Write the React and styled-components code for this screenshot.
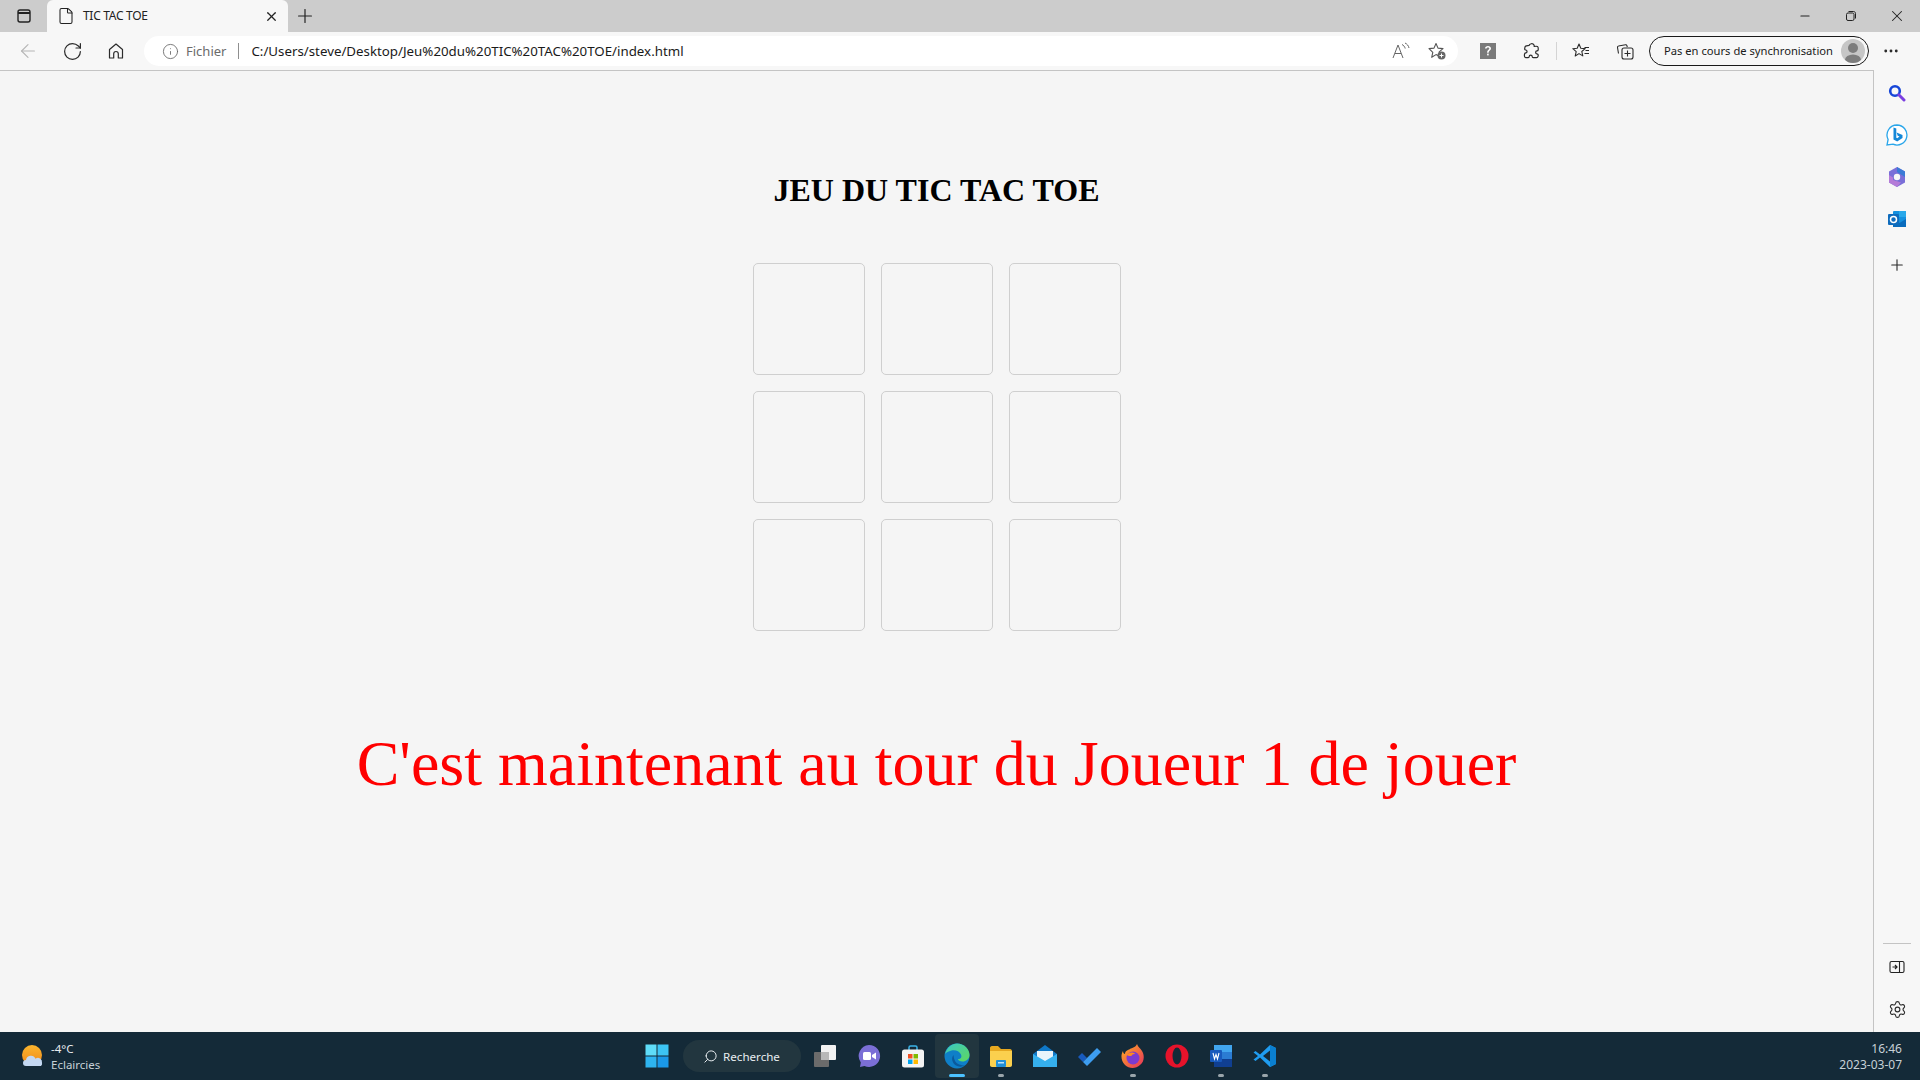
import styled, { createGlobalStyle } from "styled-components";
import {
  ArrowLeft,
  RotateCw,
  Info,
  Plus,
  X,
  Minus,
  File,
  Settings,
  Search,
  MoreHorizontal,
} from "lucide-react";

const GlobalStyle = createGlobalStyle`
  html, body {
    margin: 0;
    padding: 0;
    height: 100%;
    overflow: hidden;
  }
  body {
    font-family: "Noto Sans", "Open Sans", sans-serif;
  }
`;

const Page = styled.div`
  width: 1920px;
  height: 1080px;
  display: flex;
  flex-direction: column;
`;

const TabStrip = styled.div`
  height: 32px;
  background-color: #cccccc;
  display: flex;
  align-items: flex-end;
  flex-shrink: 0;
`;

const StripButton = styled.div`
  width: 47px;
  height: 32px;
  display: flex;
  align-items: center;
  justify-content: center;
  color: #222;
  flex-shrink: 0;
`;

const Tab = styled.div`
  width: 241px;
  height: 32px;
  background-color: #f7f7f7;
  border-radius: 6px 6px 0 0;
  display: flex;
  align-items: center;
  padding: 0 9px 0 10px;
  box-sizing: border-box;
  gap: 8px;
  color: #222;
  flex-shrink: 0;
`;

const TabTitle = styled.span`
  flex: 1;
  font-size: 12px;
  color: #222;
  letter-spacing: -0.3px;
  margin-bottom: 2px;
`;

const NewTab = styled.div`
  width: 34px;
  height: 32px;
  display: flex;
  align-items: center;
  justify-content: center;
  color: #222;
`;

const WindowControls = styled.div`
  margin-left: auto;
  display: flex;
`;

const WindowButton = styled.div`
  width: 46px;
  height: 32px;
  display: flex;
  align-items: center;
  justify-content: center;
  color: #222;
`;

const Toolbar = styled.div`
  height: 38px;
  box-sizing: border-box;
  background-color: #f7f7f7;
  display: flex;
  align-items: center;
  padding-left: 6px;
  flex-shrink: 0;
`;

const ToolButton = styled.div`
  width: 44px;
  height: 30px;
  display: flex;
  align-items: center;
  justify-content: center;
  color: ${(p) => (p.$muted ? "#b5b5b5" : "#2b2b2b")};
  flex-shrink: 0;
`;

const AddressBar = styled.div`
  width: 1314px;
  height: 30px;
  margin: 0 8px 0 6px;
  background-color: #ffffff;
  border-radius: 15px;
  display: flex;
  align-items: center;
  padding: 0 3px 0 18px;
  box-sizing: border-box;
  flex-shrink: 0;
`;

const Scheme = styled.span`
  font-size: 13px;
  color: #6b6b6b;
  margin-left: 7px;
`;

const AddressDivider = styled.span`
  width: 1px;
  height: 16px;
  background-color: #8f8f8f;
  margin: 0 12px;
`;

const Url = styled.span`
  flex: 1;
  font-size: 13.3px;
  color: #1a1a1a;
  white-space: nowrap;
`;

const AddressAction = styled.div`
  width: 36px;
  height: 30px;
  display: flex;
  align-items: center;
  justify-content: center;
`;

const ToolSeparator = styled.span`
  width: 1px;
  height: 18px;
  background-color: #d4d4d4;
  margin: 0 2px;
  flex-shrink: 0;
`;

const ProfilePill = styled.div`
  width: 220px;
  height: 30px;
  box-sizing: border-box;
  border: 1px solid #1a1a1a;
  border-radius: 15px;
  display: flex;
  align-items: center;
  justify-content: space-between;
  padding: 0 3px 1px 14px;
  font-size: 11.2px;
  color: #1a1a1a;
  flex-shrink: 0;
  margin-left: 2px;
`;

const Avatar = styled.span`
  width: 24px;
  height: 24px;
  border-radius: 50%;
  background-color: #c6c6c6;
  display: flex;
  align-items: center;
  justify-content: center;
  overflow: hidden;
`;

const Main = styled.div`
  flex: 1;
  display: flex;
  min-height: 0;
`;

const Content = styled.main`
  flex: 1;
  background-color: #f5f5f5;
  border-top: 1px solid #c4c4c4;
  border-right: 1px solid #c4c4c4;
  display: flex;
  flex-direction: column;
  align-items: center;
  font-family: "Liberation Serif", "Times New Roman", serif;
`;

const Title = styled.h1`
  font-size: 32px;
  font-weight: 700;
  line-height: 37px;
  color: #000;
  margin: 101px 0 54px;
`;

const Board = styled.div`
  display: grid;
  grid-template-columns: repeat(3, 112px);
  grid-auto-rows: 112px;
  gap: 16px;
`;

const Cell = styled.div`
  box-sizing: border-box;
  border: 1px solid #cfcfcf;
  border-radius: 5px;
`;

const Message = styled.p`
  font-size: 64px;
  line-height: 74px;
  color: #ff0000;
  margin: 96px 0 0;
`;

const Sidebar = styled.aside`
  width: 46px;
  background-color: #f7f7f7;
  display: flex;
  flex-direction: column;
  align-items: center;
  padding-top: 2px;
  box-sizing: border-box;
`;

const SideButton = styled.div`
  width: 46px;
  height: 42px;
  display: flex;
  align-items: center;
  justify-content: center;
  color: #2b2b2b;
`;

const SideAdd = styled(SideButton)`
  margin-top: 4px;
`;

const SideBottom = styled.div`
  margin-top: auto;
  display: flex;
  flex-direction: column;
  align-items: center;
  padding-bottom: 2px;
`;

const SideRule = styled.span`
  width: 28px;
  height: 1px;
  background-color: #c4c4c4;
  margin-bottom: 2px;
`;

const Taskbar = styled.footer`
  height: 48px;
  background-color: #142a38;
  display: grid;
  grid-template-columns: 1fr auto 1fr;
  align-items: center;
  color: #e8edf0;
  flex-shrink: 0;
`;

const Weather = styled.div`
  display: flex;
  align-items: center;
  gap: 6px;
  padding-left: 21px;
`;

const WeatherText = styled.div`
  display: flex;
  flex-direction: column;
  font-size: 11.5px;
  line-height: 16px;
  padding-top: 2px;
`;

const WeatherSub = styled.span`
  color: #c6d0d6;
`;

const Centre = styled.div`
  display: flex;
  align-items: center;
  margin-left: 1px;
`;

const TaskIcon = styled.div`
  width: 44px;
  height: 44px;
  display: flex;
  align-items: center;
  justify-content: center;
  position: relative;
  border-radius: 4px;
  background-color: ${(p) => (p.$active ? "#22363f" : "transparent")};
`;

const RunDot = styled.span`
  position: absolute;
  bottom: 1px;
  left: 50%;
  transform: translateX(-50%);
  height: 3px;
  border-radius: 2px;
  width: ${(p) => (p.$active ? "16px" : "6px")};
  background-color: ${(p) => (p.$active ? "#4cc2ff" : "#9aa5ab")};
`;

const SearchPill = styled.div`
  width: 118px;
  height: 32px;
  margin: 0 2px 0 4px;
  border-radius: 16px;
  background-color: #22363f;
  display: flex;
  align-items: center;
  justify-content: center;
  gap: 5px;
  font-size: 11.6px;
  color: #e8edf0;
`;

const FlippedSearch = styled(Search)`
  transform: scaleX(-1);
`;

const Clock = styled.div`
  justify-self: end;
  padding: 2px 18px 0 0;
  text-align: right;
  font-size: 12px;
  line-height: 16px;
  color: #c6d0d6;
`;

const HomeIcon = () => (
  <svg width="20" height="20" viewBox="0 0 20 20" fill="none" stroke="#2b2b2b" strokeWidth="1.2" strokeLinejoin="round">
    <path d="M3.500 8.500L10 3l6.500 5.500V17h-4.200v-4.200a2.300 2.300 0 0 0-4.600 0V17H3.500z" />
  </svg>
);

const PuzzleIcon = () => (
  <svg width="20" height="20" viewBox="0 0 20 20" fill="none" stroke="#2b2b2b" strokeWidth="1.200" strokeLinejoin="round">
    <path d="M7 4.500C7.500 2.500 11 2 12 4c.3.700.2 1 .2 1.500 1.400-.3 2.600-.3 3.300 0 .8.400.8 2 .7 3.300-.1.700-.6 1-1.300 1-1.600 0-1.700 3 0 3 .7 0 1.200.3 1.300 1 .1 1 0 1.800-.7 2.400-.8.500-2.800.500-4.300.400-.7 0-1-.5-1-1.200 0-1.700-3-1.700-3 0 0 .7-.3 1.200-1 1.200-1.300.1-2.500.1-3.200-.4-.6-.5-.7-2-.4-3.400.2-.7.7-1 1.300-1 1.500 0 1.500-2.800-.1-2.800C3 9 2.600 8.500 2.700 7.600c.1-1.200.3-2 1-2.500C4.500 4.700 6 4.700 7 4.500z" />
  </svg>
);

const StarPlus = () => (
  <svg width="20" height="20" viewBox="0 0 20 20" fill="none">
    <path d="M9 2.500l2 4.600 5 .5-3.800 3.300 1.100 4.900L9 13.600l-4.300 2.700 1.100-4.900L2 7.600l5-.5z" stroke="#555" strokeWidth="1.100" strokeLinejoin="round" />
    <circle cx="14.500" cy="14.500" r="4" fill="#666" />
    <path d="M14.500 12.500v4M12.500 14.500h4" stroke="#fff" strokeWidth="1" />
  </svg>
);

const ReadAloud = () => (
  <svg width="20" height="18" viewBox="0 0 20 18" fill="none" stroke="#666" strokeWidth="1">
    <path d="M2 16L7 3l5 13M4 11.500h6" />
    <path d="M11 2.500c1.600.8 2.800 2.200 3.200 4M14 1c2 .9 3.600 2.800 4 5" />
  </svg>
);

const HelpBox = () => (
  <svg width="16" height="16" viewBox="0 0 16 16">
    <rect width="16" height="16" fill="#7a7a7a" />
    <path d="M5 5.600C5 4 6.400 3 8 3s3 1 3 2.500c0 2-2.400 2.100-2.400 4.200H7.100c0-2.700 2.200-2.800 2.200-4.200 0-.6-.6-1-1.300-1-.8 0-1.300.5-1.400 1.100z" fill="#fff" />
    <rect x="7.100" y="10.600" width="1.600" height="1.800" fill="#fff" />
  </svg>
);

const FavouritesIcon = () => (
  <svg width="20" height="20" viewBox="0 0 20 20" fill="none" stroke="#2b2b2b" strokeWidth="1.100" strokeLinejoin="round">
    <path d="M8 3l1.800 4.200 4.400.4-3.400 2.900 1 4.400L8 12.600 4.200 15l1-4.400-3.400-2.900 4.400-.4z" />
    <path d="M13.500 6.500H18M14.500 9.500H18M13.500 12.500H18" />
  </svg>
);

const CollectionsIcon = () => (
  <svg width="20" height="20" viewBox="0 0 20 20" fill="none" stroke="#2b2b2b" strokeWidth="1.100">
    <path d="M3.500 12.500l-1-6c-.1-.8.3-1.400 1-1.500l7-1.200c.6-.1 1.200.2 1.400.8l.4 1.400" />
    <rect x="7" y="7" width="11" height="11" rx="2" />
    <path d="M12.500 9.500v6M9.500 12.500h6" />
  </svg>
);

const SidebarToggleIcon = () => (
  <svg width="16" height="16" viewBox="0 0 16 16" fill="none" stroke="#222" strokeWidth="1.400">
    <rect x="2" y="2" width="12" height="12" rx="2" />
    <path d="M2 5h12" strokeWidth="2" />
  </svg>
);

const RestoreIcon = () => (
  <svg width="12" height="12" viewBox="0 0 12 12" fill="none" stroke="#222" strokeWidth="1">
    <rect x="1.500" y="3" width="7.500" height="7.500" rx="1.500" />
    <path d="M3.500 1.500h5c1.200 0 2 .8 2 2v5" />
  </svg>
);

const BingSearch = () => (
  <svg width="18" height="18" viewBox="0 0 18 18" fill="none">
    <circle cx="7" cy="7" r="4.800" stroke="#1646d8" strokeWidth="2.600" />
    <path d="M10.800 10.800L16 16" stroke="#7b3fe0" strokeWidth="3" strokeLinecap="round" />
  </svg>
);

const BingChat = () => (
  <svg width="22" height="22" viewBox="0 0 22 22" fill="none">
    <path d="M11 1a10 10 0 1 1-4 19.200L1 21l1.100-5.500A10 10 0 0 1 11 1z" stroke="#2aa6ea" strokeWidth="1.300" fill="#fff" />
    <path d="M7.500 3.500v12l3.700 2 5.300-3.400V11l-5.900-2.400 1.100 3.200 1.800.8-2.300 1.600-.9-.5V4.500z" fill="#1588d8" />
  </svg>
);

const Office = () => (
  <svg width="20" height="22" viewBox="0 0 20 22" fill="none">
    <path d="M10 1l8 4.600v10.800L10 21l-8-4.600V5.600z" fill="#7a6fd8" />
    <path d="M10 1l8 4.600V11l-4-2.500-4-2.400z" fill="#3b7bd6" />
    <path d="M2 16.400V9l4 2.400V14l8 2.400-4 4.600z" fill="#b57bd8" />
    <circle cx="10" cy="11" r="3.200" fill="#f7f7f7" />
  </svg>
);

const Outlook = () => (
  <svg width="20" height="20" viewBox="0 0 20 20">
    <rect x="6" y="2" width="13" height="16" rx="1" fill="#1490df" />
    <rect x="12" y="2" width="7" height="6" fill="#28a8ea" />
    <path d="M6 10l6.500 4L19 10v8H6z" fill="#0a6cbd" />
    <rect x="1" y="5" width="11" height="11" rx="1" fill="#0f6cbd" />
    <circle cx="6.500" cy="10.500" r="3" fill="none" stroke="#fff" strokeWidth="1.500" />
  </svg>
);

const SidePanelIcon = () => (
  <svg width="16" height="16" viewBox="0 0 16 16" fill="none" stroke="#222" strokeWidth="1.100">
    <rect x="1" y="2.500" width="14" height="11" rx="1.500" />
    <path d="M10.500 2.500v11" />
    <path d="M3.500 8h4M6 6l2 2-2 2" strokeWidth="1.200" />
  </svg>
);

const WeatherIcon = () => (
  <svg width="24" height="24" viewBox="0 0 24 24">
    <defs>
      <linearGradient id="sun" x1="0" y1="0" x2="0" y2="1">
        <stop offset="0" stopColor="#fbb52d" />
        <stop offset="1" stopColor="#ef8a1c" />
      </linearGradient>
    </defs>
    <circle cx="11" cy="11" r="10" fill="url(#sun)" />
    <path d="M5 22a3 3 0 0 1 0-6 5 5 0 0 1 9.500-1.200A4 4 0 0 1 21 18.500 3.500 3.500 0 0 1 20 22z" fill="#c4d8f2" />
  </svg>
);

const StartIcon = () => (
  <svg width="24" height="24" viewBox="0 0 24 24">
    <rect x="0.500" y="0.500" width="11" height="11" fill="#5fdcf8" />
    <rect x="12.500" y="0.500" width="11" height="11" fill="#3cc4f4" />
    <rect x="0.500" y="12.500" width="11" height="11" fill="#2eb4f0" />
    <rect x="12.500" y="12.500" width="11" height="11" fill="#1a98e8" />
  </svg>
);

const TaskViewIcon = () => (
  <svg width="24" height="24" viewBox="0 0 24 24">
    <rect x="8" y="1" width="15" height="15" rx="1" fill="#f2f2f2" />
    <rect x="1" y="8" width="15" height="15" rx="1" fill="#6b6b6b" />
    <rect x="8" y="8" width="8" height="8" fill="#b8b8b8" />
  </svg>
);

const TeamsIcon = () => (
  <svg width="24" height="24" viewBox="0 0 24 24">
    <path d="M12 1a11 11 0 1 1-4.500 21L3 23l.8-4.600A11 11 0 0 1 12 1z" fill="#7b6fd6" />
    <rect x="6" y="8" width="8" height="8" rx="1.500" fill="#fff" />
    <path d="M15 11l4-2.500v7L15 13z" fill="#fff" />
  </svg>
);

const StoreIcon = () => (
  <svg width="24" height="24" viewBox="0 0 24 24">
    <path d="M8 6V3.500C8 2.500 8.800 2 9.500 2h5c.8 0 1.500.5 1.500 1.500V6" fill="none" stroke="#3bb4e8" strokeWidth="1.500" />
    <rect x="1" y="5.500" width="22" height="18" rx="2.500" fill="#f4f4f4" />
    <rect x="7" y="10" width="4.500" height="4.500" fill="#f25022" />
    <rect x="12.500" y="10" width="4.500" height="4.500" fill="#7fba00" />
    <rect x="7" y="15.500" width="4.500" height="4.500" fill="#00a4ef" />
    <rect x="12.500" y="15.500" width="4.500" height="4.500" fill="#ffb900" />
  </svg>
);

const EdgeIcon = () => (
  <svg width="26" height="26" viewBox="0 0 26 26">
    <defs>
      <linearGradient id="edgeA" x1="0" y1="0" x2="1" y2="1">
        <stop offset="0" stopColor="#39c8c8" />
        <stop offset="1" stopColor="#5fd85c" />
      </linearGradient>
    </defs>
    <circle cx="13" cy="13" r="12.500" fill="#0f7fc8" />
    <path d="M1 11C3 4 8 .5 13 .5c7 0 12.500 5.500 12.500 11.500 0 4-3.500 6.500-7 6.500-2.500 0-4.500-1-4.500-2.500 3 0 4-2 3-4.500C15.500 8 11 6.500 7.500 7.500 4.500 8.300 2 9.500 1 11z" fill="url(#edgeA)" />
    <path d="M9.500 12c-2.500 3-1.500 8 2.500 10.500 2.500 1.500 6 1.500 9 0-4 0-8.500-1.500-10-4.500-1-2-1.500-4-1.500-6z" fill="#0b5a9c" />
  </svg>
);

const FilesIcon = () => (
  <svg width="24" height="24" viewBox="0 0 24 24">
    <path d="M1 4c0-1 .7-2 2-2h6l3 3h9c1.200 0 2 1 2 2v2H1z" fill="#e6a820" />
    <path d="M1 7h22v14c0 1.200-.8 2-2 2H3c-1.200 0-2-.8-2-2z" fill="#fbd04e" />
    <rect x="7" y="16" width="10" height="7" rx="1" fill="#1f8fd8" />
    <rect x="9" y="18" width="6" height="1.500" fill="#bde4fa" />
  </svg>
);

const MailIcon = () => (
  <svg width="24" height="24" viewBox="0 0 24 24">
    <path d="M12 1L24 10v12a1 1 0 0 1-1 1H1a1 1 0 0 1-1-1V10z" fill="#0f78c8" />
    <path d="M4 7h16v8l-8 4-8-4z" fill="#e8f4fb" />
    <path d="M0 10l12 7 12-7v13H0z" fill="#35b0ee" />
  </svg>
);

const TodoIcon = () => (
  <svg width="24" height="24" viewBox="0 0 24 24">
    <path d="M1 13l4-4 5 5-4 4z" fill="#185abd" />
    <path d="M6 18L20 4l4 4L10 22z" fill="#3d9df0" />
  </svg>
);

const FirefoxIcon = () => (
  <svg width="24" height="26" viewBox="0 0 24 26">
    <defs>
      <linearGradient id="fox" x1="0" y1="0" x2="1" y2="1">
        <stop offset="0" stopColor="#ffb11f" />
        <stop offset="1" stopColor="#e8305e" />
      </linearGradient>
    </defs>
    <path d="M16 1c1 3 3 4 5 7 3 5 2 11-2 14-4 4-11 4-15 0C0 18-.5 12 2 8c0 2 1 3 2 3 0-3 3-4 5-5 2-1 6-2 7-5z" fill="url(#fox)" />
    <circle cx="12" cy="15" r="6.500" fill="#7c3bd0" />
    <path d="M5.500 12c2-3 7-3.500 9-1-2 0-4 .5-4 2-2 0-3 0-5-1z" fill="#ff8a1e" />
  </svg>
);

const OperaIcon = () => (
  <svg width="24" height="24" viewBox="0 0 24 24">
    <circle cx="12" cy="12" r="11.500" fill="#e6132b" />
    <ellipse cx="12" cy="12" rx="4.500" ry="8.500" fill="#142a38" />
  </svg>
);

const WordIcon = () => (
  <svg width="24" height="24" viewBox="0 0 24 24">
    <rect x="5" y="1" width="18" height="22" rx="1.500" fill="#2b7cd3" />
    <rect x="5" y="1" width="18" height="7" fill="#41a5ee" />
    <rect x="5" y="15" width="18" height="8" fill="#103f91" />
    <rect x="1" y="6" width="12" height="12" rx="1" fill="#185abd" />
    <path d="M3 9l1.500 6 1.500-4.500L7.500 15 9 9" transform="translate(1 0)" fill="none" stroke="#fff" strokeWidth="1.100" />
  </svg>
);

const VSCodeIcon = () => (
  <svg width="24" height="24" viewBox="0 0 24 24">
    <path d="M17 1l6 3v16l-6 3-10-9.500L2.500 17 .5 15.500 5 12 .5 8.500 2.500 7 7 10.500z" fill="#1f9cf0" />
    <path d="M17 6.500L10 12l7 5.500z" fill="#142a38" />
    <path d="M17 1l6 3v16l-6 3z" fill="#0a7fd0" />
  </svg>
);

const AvatarIcon = () => (
  <svg width="24" height="24" viewBox="0 0 24 24">
    <circle cx="12" cy="9" r="5" fill="#7d7d7d" />
    <ellipse cx="12" cy="21" rx="8" ry="5.500" fill="#7d7d7d" />
  </svg>
);

const cells = Array.from({ length: 9 }, (_, i) => i);

const pinned = [
  { Icon: TaskViewIcon, name: "taskview" },
  { Icon: TeamsIcon, name: "teams" },
  { Icon: StoreIcon, name: "store" },
  { Icon: EdgeIcon, name: "edge", active: true },
  { Icon: FilesIcon, name: "files", running: true },
  { Icon: MailIcon, name: "mail" },
  { Icon: TodoIcon, name: "todo" },
  { Icon: FirefoxIcon, name: "firefox", running: true },
  { Icon: OperaIcon, name: "opera" },
  { Icon: WordIcon, name: "word", running: true },
  { Icon: VSCodeIcon, name: "vscode", running: true },
];

const App = () => {
  return (
    <Page>
      <GlobalStyle />
      <TabStrip>
        <StripButton>
          <SidebarToggleIcon />
        </StripButton>
        <Tab>
          <File size={18} strokeWidth={1.4} />
          <TabTitle>TIC TAC TOE</TabTitle>
          <X size={15} strokeWidth={2} />
        </Tab>
        <NewTab>
          <Plus size={22} strokeWidth={1.3} />
        </NewTab>
        <WindowControls>
          <WindowButton>
            <Minus size={14} strokeWidth={1.8} />
          </WindowButton>
          <WindowButton>
            <RestoreIcon />
          </WindowButton>
          <WindowButton>
            <X size={18} strokeWidth={1.4} />
          </WindowButton>
        </WindowControls>
      </TabStrip>
      <Toolbar>
        <ToolButton $muted>
          <ArrowLeft size={22} strokeWidth={1.2} />
        </ToolButton>
        <ToolButton>
          <RotateCw size={21} strokeWidth={1.4} />
        </ToolButton>
        <ToolButton>
          <HomeIcon />
        </ToolButton>
        <AddressBar>
          <Info size={17} strokeWidth={1.2} color="#666" />
          <Scheme>Fichier</Scheme>
          <AddressDivider />
          <Url>C:/Users/steve/Desktop/Jeu%20du%20TIC%20TAC%20TOE/index.html</Url>
          <AddressAction>
            <ReadAloud />
          </AddressAction>
          <AddressAction>
            <StarPlus />
          </AddressAction>
        </AddressBar>
        <ToolButton>
          <HelpBox />
        </ToolButton>
        <ToolButton>
          <PuzzleIcon />
        </ToolButton>
        <ToolSeparator />
        <ToolButton>
          <FavouritesIcon />
        </ToolButton>
        <ToolButton>
          <CollectionsIcon />
        </ToolButton>
        <ProfilePill>
          Pas en cours de synchronisation
          <Avatar>
            <AvatarIcon />
          </Avatar>
        </ProfilePill>
        <ToolButton>
          <MoreHorizontal size={18} strokeWidth={1.8} />
        </ToolButton>
      </Toolbar>
      <Main>
        <Content>
          <Title>JEU DU TIC TAC TOE</Title>
          <Board>
            {cells.map((c) => (
              <Cell key={c} />
            ))}
          </Board>
          <Message>C'est maintenant au tour du Joueur 1 de jouer</Message>
        </Content>
        <Sidebar>
          <SideButton>
            <BingSearch />
          </SideButton>
          <SideButton>
            <BingChat />
          </SideButton>
          <SideButton>
            <Office />
          </SideButton>
          <SideButton>
            <Outlook />
          </SideButton>
          <SideAdd>
            <Plus size={18} strokeWidth={1.5} />
          </SideAdd>
          <SideBottom>
            <SideRule />
            <SideButton>
              <SidePanelIcon />
            </SideButton>
            <SideButton>
              <Settings size={19} strokeWidth={1.4} />
            </SideButton>
          </SideBottom>
        </Sidebar>
      </Main>
      <Taskbar>
        <Weather>
          <WeatherIcon />
          <WeatherText>
            <span>-4°C</span>
            <WeatherSub>Eclaircies</WeatherSub>
          </WeatherText>
        </Weather>
        <Centre>
          <TaskIcon>
            <StartIcon />
          </TaskIcon>
          <SearchPill>
            <FlippedSearch size={15} strokeWidth={1.6} />
            Recherche
          </SearchPill>
          {pinned.map(({ Icon, name, active, running }) => (
            <TaskIcon key={name} $active={active}>
              <Icon />
              {(active || running) && <RunDot $active={active} />}
            </TaskIcon>
          ))}
        </Centre>
        <Clock>
          16:46
          <br />
          2023-03-07
        </Clock>
      </Taskbar>
    </Page>
  );
};

export default App;
